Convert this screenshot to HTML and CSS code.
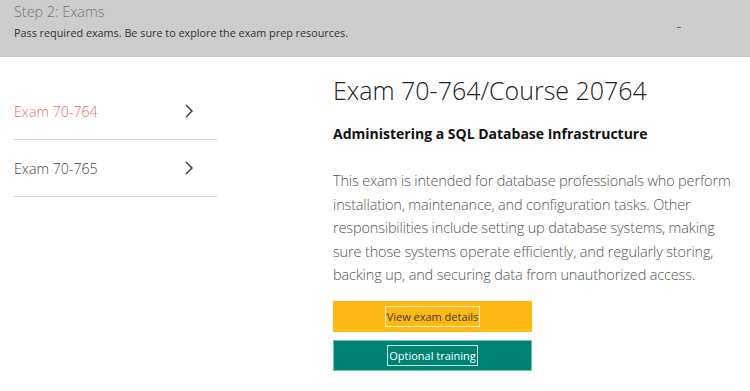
FILE: index.html
```html
<!DOCTYPE html>
<html lang="en">
<head>
  <meta charset="UTF-8">
  <title>Step 2: Exams</title>
  <link rel="stylesheet" href="styles.css">
</head>
<body>
  <div class="step">
    <h2>Step 2: Exams</h2>
    <p>Pass required exams. Be sure to explore the exam prep resources.</p>
    <span class="dash"></span>
  </div>

  <div class="content">
    <ul class="exams">
      <li class="active">Exam 70-764
        <svg width="8" height="14" viewBox="0 0 8 14"><path d="M1 1l6 6-6 6" fill="none" stroke="#333" stroke-width="1.4"/></svg>
      </li>
      <li>Exam 70-765
        <svg width="8" height="14" viewBox="0 0 8 14"><path d="M1 1l6 6-6 6" fill="none" stroke="#333" stroke-width="1.4"/></svg>
      </li>
    </ul>

    <div class="details">
      <h1>Exam 70-764/Course 20764</h1>
      <h3>Administering a SQL Database Infrastructure</h3>
      <p>This exam is intended for database professionals who perform installation, maintenance, and configuration tasks. Other responsibilities include setting up database systems, making sure those systems operate efficiently, and regularly storing, backing up, and securing data from unauthorized access.</p>
      <a class="button yellow" href="#"><span>View exam details</span></a>
      <a class="button green" href="#"><span>Optional training</span></a>
    </div>
  </div>
</body>
</html>
```

FILE: styles.css
```css
body {
  margin: 0;
  font-family: 'Open Sans', sans-serif;
  background: #fff;
  color: #333;
}

.step {
  position: relative;
  background: #cccccc;
  height: 57px;
  padding: 0 14px;
  box-sizing: border-box;
}

.step h2 {
  margin: 0;
  padding-top: 2px;
  font-size: 14.4px;
  font-weight: 300;
  color: #767676;
}

.step p {
  margin: 4px 0 0;
  font-size: 10.8px;
  color: #333;
}

.dash {
  position: absolute;
  left: 677px;
  top: 27px;
  width: 4px;
  height: 1px;
  background: #666;
}

.content {
  display: flex;
}

.exams {
  list-style: none;
  margin: 26px 0 0 14px;
  padding: 0;
  width: 203px;
}

.exams li {
  display: flex;
  align-items: center;
  justify-content: space-between;
  height: 57px;
  box-sizing: border-box;
  padding-right: 24px;
  border-bottom: 1px solid #d6d6d6;
  font-size: 14.2px;
  font-weight: 300;
  color: #444;
}

.exams li.active {
  color: #e8705a;
}

.details {
  margin-left: 116px;
  width: 405px;
}

.details h1 {
  margin: 16px 0 0;
  font-size: 25px;
  font-weight: 300;
  color: #222;
}

.details h3 {
  margin: 17px 0 0;
  font-size: 14px;
  font-weight: 700;
  color: #111;
}

.details p {
  margin: 26px 0 0;
  font-size: 14.5px;
  letter-spacing: -0.15px;
  font-weight: 300;
  line-height: 23.5px;
  color: #555;
}

.button {
  display: flex;
  justify-content: center;
  align-items: center;
  width: 199px;
  height: 31px;
  text-decoration: none;
  font-size: 11px;
  box-sizing: border-box;
}

.button span {
  padding: 2px 1px;
  border: 1px solid rgba(255, 255, 255, 0.75);
}

.yellow {
  background: #ffb914;
  color: #3a3a3a;
  margin-top: 14px;
}

.green {
  background: #008272;
  color: #fff;
  border: 1px solid #6fc2b6;
  margin-top: 8px;
}
```
